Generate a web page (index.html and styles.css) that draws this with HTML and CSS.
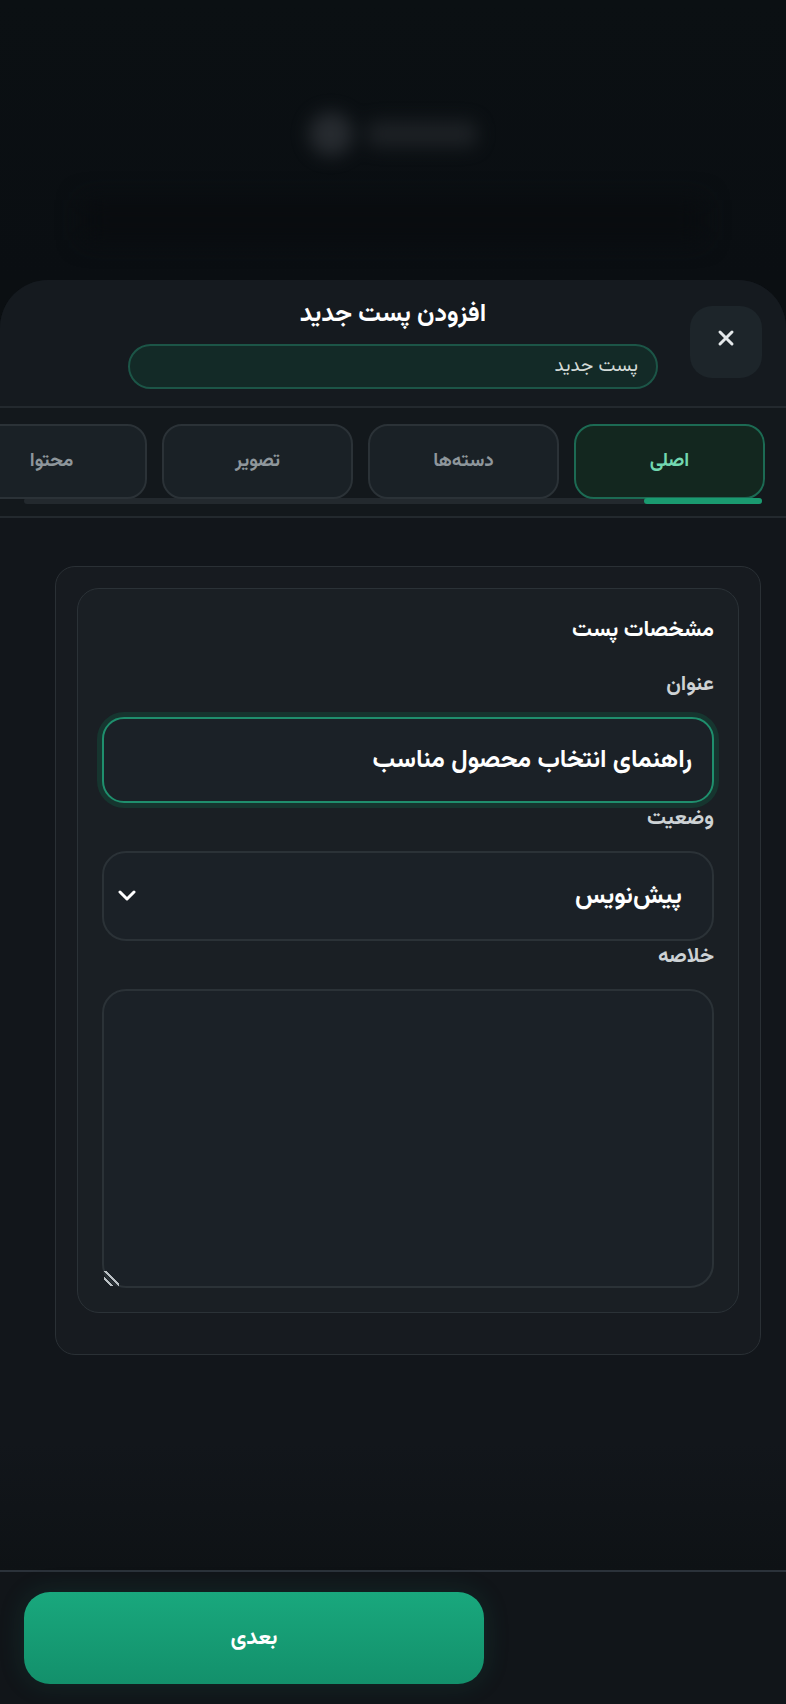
FILE: index.html
```html
<!DOCTYPE html>
<html lang="fa" dir="rtl">
<head>
<meta charset="utf-8">
<title>افزودن پست جدید</title>
<link rel="stylesheet" href="styles.css">
</head>
<body>
  <div class="backdrop">
    <div class="ghost-head">
      <span class="ghost-dot"></span>
      <span class="ghost-bar"></span>
    </div>
    <div class="ghost-band"></div>
  </div>

  <div class="sheet">
    <header class="sheet-head">
      <button class="close-btn" aria-label="بستن">
        <svg viewBox="0 0 20 20" width="20" height="20"><path d="M4 4 L16 16 M16 4 L4 16" stroke="#e4e8ea" stroke-width="3" stroke-linecap="round" fill="none"/></svg>
      </button>
      <div class="head-center">
        <h1 class="sheet-title">افزودن پست جدید</h1>
        <div class="sub-pill">پست جدید</div>
      </div>
      <div class="head-spacer"></div>
    </header>

    <nav class="tabs-wrap">
      <div class="tabs">
        <div class="tab active">اصلی</div>
        <div class="tab">دسته‌ها</div>
        <div class="tab">تصویر</div>
        <div class="tab">محتوا</div>
      </div>
      <div class="tab-track"><div class="tab-thumb"></div></div>
    </nav>

    <main class="content">
      <section class="outer-card">
        <div class="inner-card">
          <h2 class="card-title">مشخصات پست</h2>

          <label class="field-label first">عنوان</label>
          <input class="field-input focused" type="text" value="راهنمای انتخاب محصول مناسب" readonly>

          <label class="field-label">وضعیت</label>
          <div class="field-select">
            <span class="select-value">پیش‌نویس</span>
            <svg class="chev" viewBox="0 0 18 12" width="18" height="12"><path d="M2 2 L9 9 L16 2" stroke="#ffffff" stroke-width="3" stroke-linecap="round" stroke-linejoin="round" fill="none"/></svg>
          </div>

          <label class="field-label">خلاصه</label>
          <textarea class="field-area"></textarea>
        </div>
      </section>
    </main>

    <footer class="sheet-foot">
      <button class="next-btn">بعدی</button>
    </footer>
  </div>
</body>
</html>
```
FILE: styles.css
```css
* { box-sizing: border-box; }

html, body {
  margin: 0;
  padding: 0;
  background: #0b0f12;
  font-family: "Vazirmatn", "Noto Sans Arabic", "DejaVu Sans", sans-serif;
  color: #ffffff;
}

body {
  min-height: 100vh;
  display: flex;
  flex-direction: column;
}

/* ---------- blurred page behind the sheet ---------- */
.backdrop {
  height: 280px;
  flex: 0 0 280px;
  background: linear-gradient(180deg, #0b1013 0%, #0a0e12 100%);
  overflow: hidden;
  display: flex;
  flex-direction: column;
  align-items: center;
}

.ghost-head {
  margin-top: 112px;
  display: flex;
  direction: ltr;
  align-items: center;
  gap: 14px;
  filter: blur(9px);
  opacity: 0.9;
}

.ghost-dot {
  width: 44px;
  height: 44px;
  border-radius: 50%;
  background: #2a2e33;
}

.ghost-bar {
  width: 110px;
  height: 26px;
  border-radius: 8px;
  background: #1f2327;
}

.ghost-band {
  margin-top: 44px;
  width: 620px;
  height: 40px;
  background: #090c0f;
  filter: blur(12px);
}

/* ---------- sheet ---------- */
.sheet {
  flex: 1;
  display: flex;
  flex-direction: column;
  background: #12161b;
  border-radius: 48px 48px 0 0;
  overflow: hidden;
}

.sheet-head {
  display: flex;
  align-items: center;
  gap: 32px;
  padding: 20px 24px 17px;
  background: #151a1f;
  border-bottom: 2px solid #23292e;
}

.close-btn {
  flex: 0 0 72px;
  width: 72px;
  height: 72px;
  margin-top: -6px;
  border: none;
  border-radius: 22px;
  background: #1d252a;
  display: flex;
  align-items: center;
  justify-content: center;
  padding: 0 0 8px;
}

.head-spacer { flex: 0 0 72px; }

.head-center {
  flex: 1;
  display: flex;
  flex-direction: column;
  align-items: center;
  gap: 14px;
}

.sheet-title {
  margin: 0;
  font-size: 25px;
  line-height: 30px;
  font-weight: 700;
  color: #ffffff;
}

.sub-pill {
  width: 100%;
  height: 45px;
  border-radius: 23px;
  background: #132a27;
  border: 2px solid #1c5547;
  padding: 0 18px;
  display: flex;
  align-items: center;
  font-size: 19px;
  color: #d3dbd8;
}

/* ---------- tabs ---------- */
.tabs-wrap {
  background: #13181c;
  padding-top: 16px;
  padding-bottom: 12px;
  border-bottom: 2px solid #23292e;
  overflow: hidden;
}

.tabs {
  display: flex;
  gap: 15px;
  padding: 0 21px;
  overflow: hidden;
}

.tab {
  flex: 0 0 191px;
  height: 75px;
  border-radius: 20px;
  background: #1a2126;
  border: 2px solid #2b3237;
  display: flex;
  align-items: center;
  justify-content: center;
  font-size: 19px;
  font-weight: 700;
  color: #8e969b;
}

.tab.active {
  background: #13271f;
  border-color: #1c6a53;
  color: #72d8b0;
}

.tab-track {
  margin: -1px 24px 0;
  height: 6px;
  border-radius: 3px;
  background: #23292e;
  display: flex;
}

.tab-thumb {
  width: 118px;
  height: 6px;
  border-radius: 3px;
  background: #1a9a70;
}

/* ---------- content ---------- */
.content {
  flex: 1;
  padding: 48px 25px 24px 55px;
  background: linear-gradient(180deg, #12161b 0%, #12161b 88%, #0e1215 100%);
}

.outer-card {
  background: #171b20;
  border: 1px solid #2a3035;
  border-radius: 20px;
  padding: 21px 21px 41px;
}

.inner-card {
  background: #1a1f24;
  border: 1px solid #2b3237;
  border-radius: 22px;
  padding: 27px 24px 24px;
  display: flex;
  flex-direction: column;
}

.card-title {
  margin: 0;
  font-size: 22px;
  line-height: 30px;
  font-weight: 700;
  color: #ffffff;
}

.field-label {
  display: block;
  margin-top: 4px;
  margin-bottom: 20px;
  font-size: 21px;
  line-height: 24px;
  font-weight: 700;
  color: #cdd2d5;
}

.field-label.first { margin-top: 27px; }

.field-input {
  display: block;
  width: 100%;
  height: 86px;
  border-radius: 22px;
  background: #1b2127;
  border: 2px solid #2d343a;
  padding: 0 20px;
  font-family: inherit;
  font-size: 25px;
  font-weight: 700;
  color: #ffffff;
  direction: rtl;
  outline: none;
}

.field-input.focused {
  border-color: #1f8f6d;
  box-shadow: 0 0 0 5px #16352f;
}

.field-select {
  height: 90px;
  border-radius: 24px;
  background: #1b2127;
  border: 2px solid #2b3237;
  padding: 0 30px 0 14px;
  display: flex;
  align-items: center;
  justify-content: space-between;
}

.select-value {
  font-size: 25px;
  font-weight: 700;
  color: #ffffff;
}

.chev { display: block; }

.field-area {
  display: block;
  width: 100%;
  height: 299px;
  border-radius: 24px;
  background: #1b2127;
  border: 2px solid #2b3237;
  resize: vertical;
  font-family: inherit;
  font-size: 18px;
  color: #ffffff;
  padding: 16px 20px;
  outline: none;
  direction: rtl;
}

.field-area::-webkit-resizer {
  background: linear-gradient(45deg,
    transparent 0 22%,
    #b9bfc3 22% 32%,
    transparent 32% 48%,
    #b9bfc3 48% 58%,
    transparent 58%);
}

/* ---------- footer ---------- */
.sheet-foot {
  background: #111519;
  border-top: 2px solid #2b323a;
  padding: 20px 24px;
  display: flex;
  direction: ltr;
}

.next-btn {
  width: 460px;
  height: 92px;
  border: none;
  border-radius: 26px;
  background: linear-gradient(180deg, #19a87d 0%, #13906b 100%);
  box-shadow: 0 0 26px rgba(25, 140, 110, 0.18);
  font-family: inherit;
  font-size: 22px;
  font-weight: 700;
  color: #ffffff;
}
```
